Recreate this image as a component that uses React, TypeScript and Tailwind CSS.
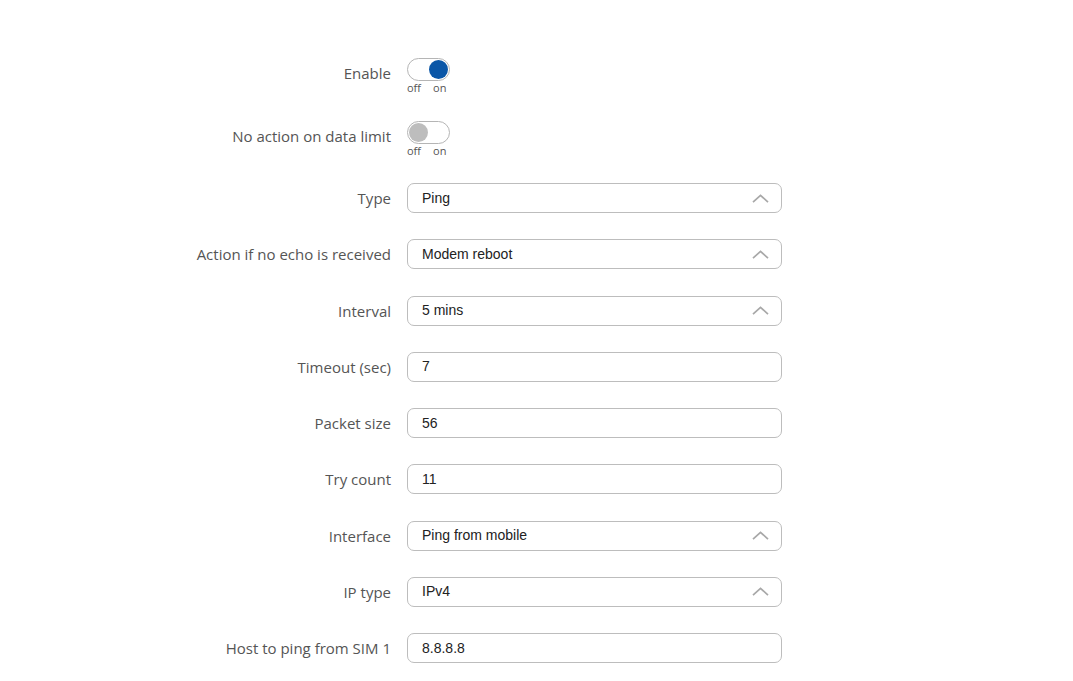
import React from "react";

const labelCls =
  "w-[391px] text-right text-[15px] text-[#555] font-['Open_Sans',sans-serif] leading-[20px]";

const Toggle = ({ on }: { on: boolean }) => (
  <div className="flex flex-col">
    <div className="relative w-[43px] h-[23px] rounded-full border border-[#b5b5b5] bg-white">
      <div
        className={
          on
            ? "absolute top-[1px] right-[1px] w-[19px] h-[19px] rounded-full bg-[#0a56a7]"
            : "absolute top-[1px] left-[1px] w-[19px] h-[19px] rounded-full bg-[#bdbdbd]"
        }
      />
    </div>
    <div className="flex text-[11px] leading-[12px] mt-[1px] text-[#555] font-['Open_Sans',sans-serif]">
      <span>off</span>
      <span className="ml-[12px]">on</span>
    </div>
  </div>
);

const ToggleRow = ({ label, on, h }: { label: string; on: boolean; h: string }) => (
  <div className={"flex items-start gap-4 " + h}>
    <div className={labelCls + " pt-[5px]"}>{label}</div>
    <Toggle on={on} />
  </div>
);

const Chevron = () => (
  <svg width="17" height="9" viewBox="0 0 17 9" fill="none" className="shrink-0">
    <path d="M1 8.2 L8.5 1.3 L16 8.2" stroke="#a8a8a8" strokeWidth="1.7" />
  </svg>
);

const Field = ({ label, value, select }: { label: string; value: string; select?: boolean }) => (
  <div className="flex items-center gap-4 h-[30px]">
    <div className={labelCls}>{label}</div>
    <div className="w-[375px] h-[30px] rounded-[7px] border border-[#bdbdbd] bg-white flex items-center justify-between pl-[14px] pr-[12px] text-[14px] text-[#222] font-['Liberation_Sans',Arial,sans-serif]">
      <span>{value}</span>
      {select && <Chevron />}
    </div>
  </div>
);

const App = () => {
  return (
    <div className="w-full min-h-[681px] bg-white pt-[58px]">
      <ToggleRow label="Enable" on={true} h="h-[63px]" />
      <ToggleRow label="No action on data limit" on={false} h="h-[62px]" />
      <div className="flex flex-col gap-[26.25px]">
        <Field label="Type" value="Ping" select />
        <Field label="Action if no echo is received" value="Modem reboot" select />
        <Field label="Interval" value="5 mins" select />
        <Field label="Timeout (sec)" value="7" />
        <Field label="Packet size" value="56" />
        <Field label="Try count" value="11" />
        <Field label="Interface" value="Ping from mobile" select />
        <Field label="IP type" value="IPv4" select />
        <Field label="Host to ping from SIM 1" value="8.8.8.8" />
      </div>
    </div>
  );
};

export default App;
